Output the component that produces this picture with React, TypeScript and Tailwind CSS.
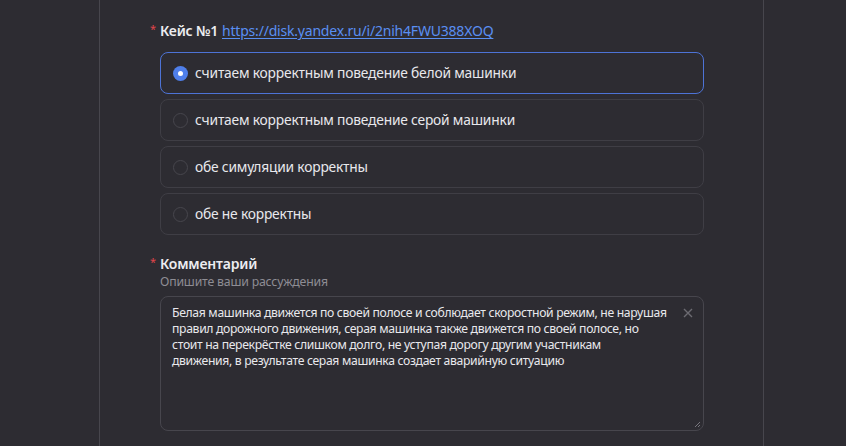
import React from "react";

const options = [
  "считаем корректным поведение белой машинки",
  "считаем корректным поведение серой машинки",
  "обе симуляции корректны",
  "обе не корректны",
];

export default function App() {
  return (
    <div
      className="w-[846px] h-[446px] bg-[#2d2c32] overflow-hidden flex"
      style={{ fontFamily: '"Noto Sans", Inter, sans-serif' }}
    >
      <div className="w-[99px] shrink-0" />
      <div className="w-[665px] shrink-0 border-x border-[#47464d] pl-[50px] pr-[59px] pt-[21px]">
        <div className="flex items-center text-[14px] leading-[20px] text-[#ececf0] tracking-[-0.2px]">
          <span className="text-[#e0454b] w-[10px] text-[11px] relative top-[-2px]">*</span>
          <span className="font-semibold">Кейс №1</span>
          <a className="ml-[4px] text-[#5a8ff2] underline underline-offset-2" href="#">
            https://disk.yandex.ru/i/2nih4FWU388XOQ
          </a>
        </div>
        <div className="ml-[10px] mt-[11px] flex flex-col gap-[5px]">
          {options.map((o, i) => (
            <div
              key={o}
              className={
                "h-[42px] rounded-[8px] border flex items-center pl-[12px] " +
                (i === 0 ? "border-[#4d73d6]" : "border-[#3f3e45]")
              }
            >
              {i === 0 ? (
                <span className="w-[15px] h-[15px] rounded-full bg-[#4f7fea] flex items-center justify-center">
                  <span className="w-[5px] h-[5px] rounded-full bg-white" />
                </span>
              ) : (
                <span className="w-[15px] h-[15px] rounded-full border border-[#47464d]" />
              )}
              <span className="ml-[7px] text-[13.8px] tracking-[-0.2px] text-[#e8e8ec]">{o}</span>
            </div>
          ))}
        </div>
        <div className="mt-[19px] flex items-center text-[14px] leading-[20px] text-[#ececf0] tracking-[-0.2px]">
          <span className="text-[#e0454b] w-[10px] text-[11px] relative top-[-2px]">*</span>
          <span className="font-semibold">Комментарий</span>
        </div>
        <div className="ml-[10px] text-[12.3px] leading-[16px] tracking-[-0.2px] text-[#8e8d94]">Опишите ваши рассуждения</div>
        <div className="ml-[10px] mt-[6px] h-[135px] rounded-[8px] border border-[#47464d] relative pl-[11px] pr-[20px] pt-[8px]">
          <div className="text-[12.2px] leading-[16px] tracking-[-0.33px] text-[#e8e8ec] whitespace-nowrap">
            Белая машинка движется по своей полосе и соблюдает скоростной режим, не нарушая
            <br />
            правил дорожного движения, серая машинка также движется по своей полосе, но
            <br />
            стоит на перекрёстке слишком долго, не уступая дорогу другим участникам
            <br />
            движения, в результате серая машинка создает аварийную ситуацию
          </div>
          <svg className="absolute right-[10px] top-[11px]" width="10" height="10" viewBox="0 0 10 10">
            <path d="M1 1L9 9M9 1L1 9" stroke="#6c6b72" strokeWidth="1.4" />
          </svg>
          <svg className="absolute right-[2px] bottom-[2px]" width="7" height="7" viewBox="0 0 7 7">
            <path d="M6 1L1 6M6 4L4 6" stroke="#77767d" strokeWidth="1" />
          </svg>
        </div>
      </div>
    </div>
  );
}
